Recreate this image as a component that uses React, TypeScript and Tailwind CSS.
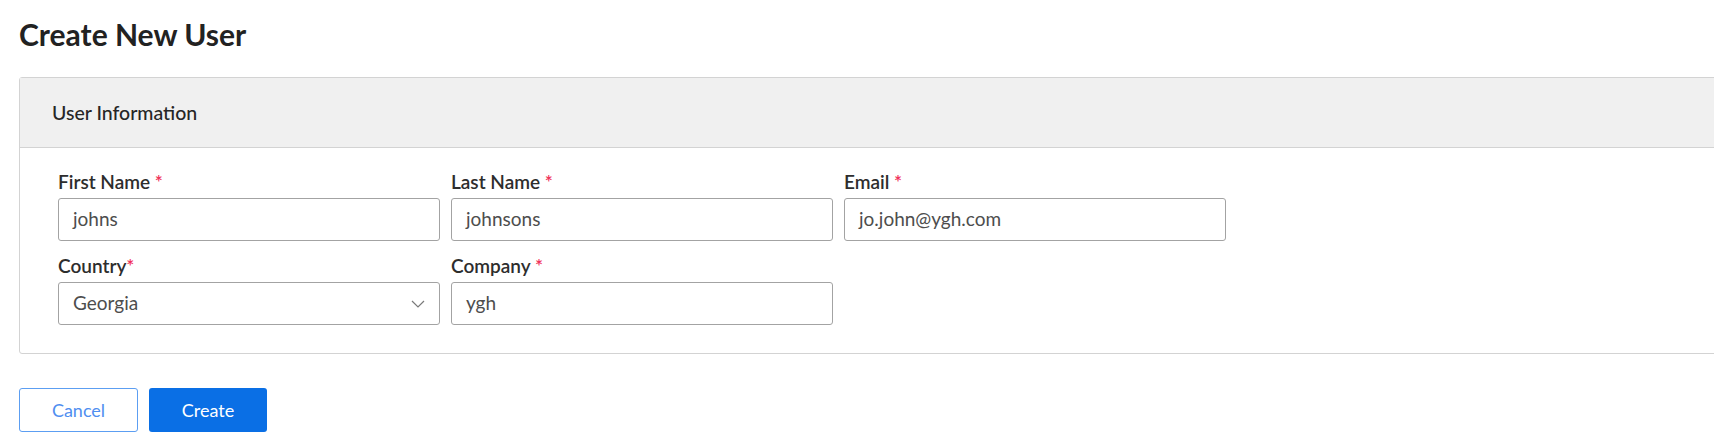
import type { ReactNode } from "react";

const FONT = "font-['Lato','Noto_Sans',sans-serif]";

function Field({
  label,
  tight,
  children,
}: {
  label: string;
  tight?: boolean;
  children: ReactNode;
}) {
  return (
    <div className="flex flex-col">
      <label className="mb-[4px] text-[19px] leading-[24px] font-semibold text-[#2d2d2d]">
        {label}
        <span className="text-[#f0325a]">{tight ? "*" : " *"}</span>
      </label>
      {children}
    </div>
  );
}

function TextBox({ value }: { value: string }) {
  return (
    <div className="flex h-[43px] items-center rounded-[3px] border border-[#a3a3a3] bg-white pl-[14px] text-[19px] text-[#4d4d4d]">
      {value}
    </div>
  );
}

function SelectBox({ value }: { value: string }) {
  return (
    <div className="flex h-[43px] items-center justify-between rounded-[3px] border border-[#a3a3a3] bg-white pr-[14px] pl-[14px] text-[19px] text-[#4d4d4d]">
      <span>{value}</span>
      <svg
        width="14"
        height="8"
        viewBox="0 0 14 8"
        fill="none"
        stroke="#7a7a7a"
        strokeWidth="1.2"
        aria-hidden="true"
      >
        <polyline points="1,1 7,7 13,1" />
      </svg>
    </div>
  );
}

export default function App() {
  return (
    <div className={`h-[448px] w-full overflow-hidden bg-white ${FONT}`}>
      <h1 className="pt-[16px] pl-[19px] text-[30px] leading-[36px] font-bold text-[#222]">
        Create New User
      </h1>

      <section className="mt-[25px] -mr-[20px] ml-[19px] rounded-[3px] border border-[#d3d3d3]">
        <div className="flex h-[70px] items-center border-b border-[#d3d3d3] bg-[#f0f0f0] pl-[32px] text-[19.5px] font-medium text-[#262626]">
          User Information
        </div>
        <div className="grid grid-cols-[382px_382px_382px] gap-x-[11px] gap-y-[13px] pt-[22px] pr-[38px] pb-[28px] pl-[38px]">
          <Field label="First Name">
            <TextBox value="johns" />
          </Field>
          <Field label="Last Name">
            <TextBox value="johnsons" />
          </Field>
          <Field label="Email">
            <TextBox value="jo.john@ygh.com" />
          </Field>
          <Field label="Country" tight>
            <SelectBox value="Georgia" />
          </Field>
          <Field label="Company">
            <TextBox value="ygh" />
          </Field>
        </div>
      </section>

      <div className="mt-[34px] ml-[19px] flex gap-[11px]">
        <button
          type="button"
          className="h-[44px] w-[119px] rounded-[3px] border border-[#5c9ef2] bg-white text-[18px] text-[#4f8ef0]"
        >
          Cancel
        </button>
        <button
          type="button"
          className="h-[44px] w-[118px] rounded-[3px] bg-[#0a6fe5] text-[18px] text-white"
        >
          Create
        </button>
      </div>
    </div>
  );
}
